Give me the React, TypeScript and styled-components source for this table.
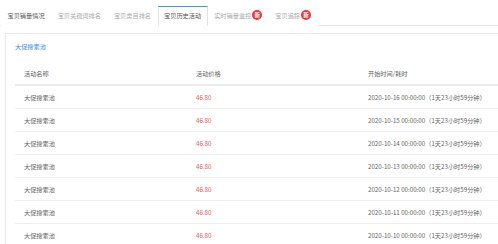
import React from "react";
import styled, { createGlobalStyle } from "styled-components";

const GlobalStyle = createGlobalStyle`
  body {
    margin: 0;
    background: #ffffff;
    font-family: "Noto Sans CJK SC", "Noto Sans", sans-serif;
    font-size: 6.2px;
    color: #666;
  }
`;

const Page = styled.div`
  width: 498px;
  height: 244px;
  overflow: hidden;
`;

const TabBar = styled.div`
  display: flex;
  align-items: flex-end;
  height: 25px;
  border-bottom: 1px solid #e6e6e6;
  padding-left: 1px;
`;

const Tab = styled.div<{ $active?: boolean; $dark?: boolean }>`
  display: flex;
  align-items: center;
  height: ${(p) => (p.$active ? "18.5px" : "20px")};
  padding: 0 5.5px;
  margin-bottom: -1px;
  color: ${(p) => (p.$active || p.$dark ? "#555" : "#aaa")};
  background: #fff;
  border-top: ${(p) => (p.$active ? "1.5px solid #3b9ee0" : "none")};
  border-left: 1px solid ${(p) => (p.$active ? "#e2e2e2" : "transparent")};
  border-right: 1px solid ${(p) => (p.$active ? "#e2e2e2" : "transparent")};
  border-bottom: 1px solid ${(p) => (p.$active ? "#fff" : "transparent")};
  white-space: nowrap;
`;

const Badge = styled.span`
  display: inline-flex;
  align-items: center;
  justify-content: center;
  width: 10px;
  height: 10px;
  margin-left: 1px;
  border-radius: 50%;
  background: #e8373a;
  color: #fff;
  font-size: 5.5px;
  font-weight: bold;
`;

const Panel = styled.div`
  margin: 7px 0 0 5px;
  border-top: 1px solid #e9e9e9;
  border-left: 1px solid #e9e9e9;
  padding: 6px 0 0 9px;
`;

const Link = styled.div`
  color: #3c8fdf;
  height: 14px;
  line-height: 14px;
`;

const Table = styled.div`
  margin-top: 8px;
`;

const HeadRow = styled.div`
  display: grid;
  grid-template-columns: 172px 172px 1fr;
  height: 22px;
  align-items: center;
  padding-left: 9px;
  border-bottom: 2px solid #ececec;
  color: #666;
`;

const Row = styled.div`
  display: grid;
  grid-template-columns: 172px 172px 1fr;
  height: 22px;
  align-items: center;
  padding-left: 9px;
  border-bottom: 1px solid #efefef;
`;

const Price = styled.span`
  color: #e4585a;
`;

const tabs = [
  { label: "宝贝销量情况", dark: true },
  { label: "宝贝关键词排名" },
  { label: "宝贝类目排名" },
  { label: "宝贝历史活动", active: true },
  { label: "实时销量监控", badge: true },
  { label: "宝贝追踪", badge: true },
];

const days = [16, 15, 14, 13, 12, 11, 10];

export default function App() {
  return (
    <Page>
      <GlobalStyle />
      <TabBar>
        {tabs.map((t) => (
          <Tab key={t.label} $active={t.active} $dark={t.dark}>
            {t.label}
            {t.badge && <Badge>新</Badge>}
          </Tab>
        ))}
      </TabBar>
      <Panel>
        <Link>大促搜索池</Link>
        <Table>
          <HeadRow>
            <span>活动名称</span>
            <span>活动价格</span>
            <span>开始时间/耗时</span>
          </HeadRow>
          {days.map((d) => (
            <Row key={d}>
              <span>大促搜索池</span>
              <Price>46.80</Price>
              <span>2020-10-{d} 00:00:00（1天23小时59分钟）</span>
            </Row>
          ))}
        </Table>
      </Panel>
    </Page>
  );
}
